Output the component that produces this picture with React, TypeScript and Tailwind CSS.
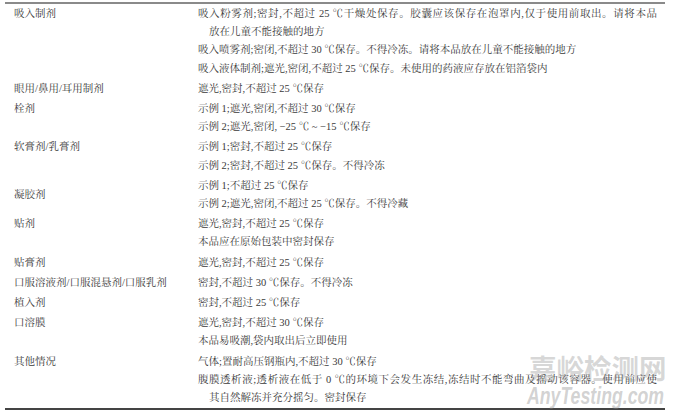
import React from "react";

type Line = { text: string; indent?: boolean; justify?: boolean };
type Row = { name: string; lines: Line[]; center?: boolean };

const rows: Row[] = [
  {
    name: "吸入制剂",
    lines: [
      {
        text: "吸入粉雾剂;密封,不超过 25 ℃干燥处保存。胶囊应该保存在泡罩内,仅于使用前取出。请将本品",
        justify: true,
      },
      { text: "放在儿童不能接触的地方", indent: true },
      { text: "吸入喷雾剂;密闭,不超过 30 ℃保存。不得冷冻。请将本品放在儿童不能接触的地方" },
      { text: "吸入液体制剂;遮光,密闭,不超过 25 ℃保存。未使用的药液应存放在铝箔袋内" },
    ],
  },
  { name: "眼用/鼻用/耳用制剂", lines: [{ text: "遮光,密封,不超过 25 ℃保存" }] },
  {
    name: "栓剂",
    lines: [
      { text: "示例 1;遮光,密闭,不超过 30 ℃保存" },
      { text: "示例 2;遮光,密闭, −25 ℃ ~ −15 ℃保存" },
    ],
  },
  {
    name: "软膏剂/乳膏剂",
    lines: [
      { text: "示例 1;密封,不超过 25 ℃保存" },
      { text: "示例 2;密封,不超过 25 ℃保存。不得冷冻" },
    ],
  },
  {
    name: "凝胶剂",
    center: true,
    lines: [
      { text: "示例 1;不超过 25 ℃保存" },
      { text: "示例 2;遮光,密闭,不超过 25 ℃保存。不得冷藏" },
    ],
  },
  {
    name: "贴剂",
    lines: [{ text: "遮光,密封,不超过 25 ℃保存" }, { text: "本品应在原始包装中密封保存" }],
  },
  { name: "贴膏剂", lines: [{ text: "遮光,密封,不超过 25 ℃保存" }] },
  { name: "口服溶液剂/口服混悬剂/口服乳剂", lines: [{ text: "密封,不超过 30 ℃保存。不得冷冻" }] },
  { name: "植入剂", lines: [{ text: "密封,不超过 25 ℃保存" }] },
  {
    name: "口溶膜",
    lines: [{ text: "遮光,密封,不超过 30 ℃保存" }, { text: "本品易吸潮,袋内取出后立即使用" }],
  },
  {
    name: "其他情况",
    lines: [
      { text: "气体;置耐高压钢瓶内,不超过 30 ℃保存" },
      {
        text: "腹膜透析液;透析液在低于 0 ℃的环境下会发生冻结,冻结时不能弯曲及摇动该容器。使用前应使",
        justify: true,
      },
      { text: "其自然解冻并充分摇匀。密封保存", indent: true },
    ],
  },
];

export default function App() {
  return (
    <div className="relative w-[680px] h-[417px] bg-white overflow-hidden font-['Liberation_Serif','Noto_Serif_CJK_SC','Noto_Sans_CJK_SC',serif] text-[10.5px] leading-[18.2px] text-[#3a3a3a]">
      <div className="ml-[5px] mt-[2px] w-[660px] border-t-2 border-b-2 border-t-[#8a8a8a] border-b-[#444]">
        {rows.map((r, i) => (
          <div key={i} className="flex py-[1px]">
            <div
              className={
                r.center
                  ? "w-[193px] pl-[9px] flex items-center"
                  : "w-[193px] pl-[9px]"
              }
            >
              {r.name}
            </div>
            <div className="w-[459px]">
              {r.lines.map((l, j) => (
                <div
                  key={j}
                  className={
                    l.justify
                      ? "whitespace-nowrap text-justify [text-align-last:justify]"
                      : l.indent
                      ? "pl-[11px] whitespace-nowrap"
                      : "whitespace-nowrap"
                  }
                >
                  {l.text}
                </div>
              ))}
            </div>
          </div>
        ))}
      </div>
      <div className="absolute left-[529px] top-[350px] text-[27.5px] leading-[34px] font-bold font-['Noto_Sans_CJK_SC',sans-serif] text-[rgba(140,140,140,0.35)] tracking-[0px] pointer-events-none">
        嘉峪检测网
      </div>
      <div className="absolute left-[527px] top-[383px] text-[23px] leading-[26px] font-bold italic font-['Liberation_Sans',sans-serif] text-[rgba(140,140,140,0.4)] origin-left scale-x-[0.77] pointer-events-none whitespace-nowrap">
        AnyTesting.com
      </div>
    </div>
  );
}
